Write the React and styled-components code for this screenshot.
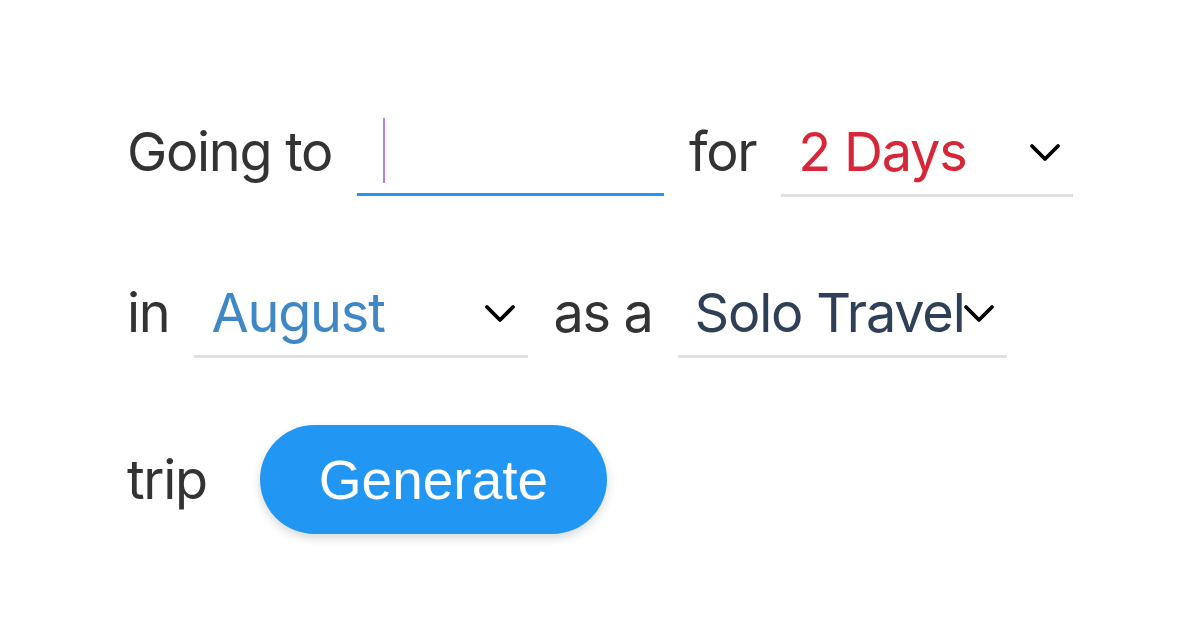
import React from "react";
import styled, { createGlobalStyle } from "styled-components";

const Global = createGlobalStyle`
  html, body { margin: 0; padding: 0; background: #fff; }
  body { font-family: Inter, "Liberation Sans", sans-serif; }
`;

const Page = styled.main`
  display: flex;
  flex-direction: column;
  padding: 77px 0 0 127px;
  width: 1200px;
  height: 630px;
  box-sizing: border-box;
`;

const Row = styled.div`
  display: flex;
  flex-wrap: wrap;
  align-items: baseline;
  align-content: center;
  gap: 25px;
  height: 161px;
`;

const Label = styled.span`
  font-size: 54px;
  line-height: 66px;
  letter-spacing: -1.3px;
  color: #333333;
`;

const InputWrap = styled.div`
  position: relative;
  width: 307px;
`;

const TextInput = styled.input`
  box-sizing: border-box;
  width: 100%;
  height: 78px;
  padding: 0 0 9px 26px;
  border: none;
  border-bottom: 3px solid #2196f3;
  outline: none;
  background: transparent;
  font-family: inherit;
  font-size: 54px;
  line-height: 66px;
  color: #333;
`;

const Caret = styled.span`
  position: absolute;
  left: 26px;
  top: 0;
  width: 2px;
  height: 65px;
  background: #b47fe0;
`;

const Field = styled.div`
  position: relative;
  box-sizing: border-box;
  width: ${(p) => p.$w}px;
  padding: 0 0 9px 17px;
  border-bottom: 3px solid #e0e0e0;
  font-size: 54px;
  line-height: 66px;
  letter-spacing: -1.2px;
  color: ${(p) => p.$color};
  white-space: nowrap;
`;

const Chevron = styled.svg`
  position: absolute;
  right: 11px;
  top: 23px;
  width: 34px;
  height: 21px;
`;

const Button = styled.button`
  margin-left: 28px;
  height: 109px;
  padding: 0 59px;
  border: none;
  border-radius: 55px;
  background: #2196f3;
  color: #fff;
  font-family: "Liberation Sans", Arial, sans-serif;
  font-size: 55px;
  line-height: 66px;
  box-shadow: 0 4px 10px rgba(0, 0, 0, 0.16);
  cursor: pointer;
`;

function Select({ value, color, width }) {
  return (
    <Field $w={width} $color={color}>
      {value}
      <Chevron viewBox="0 0 34 21" aria-hidden="true">
        <polyline
          points="4,4 17,17 30,4"
          fill="none"
          stroke="#000"
          strokeWidth="3.8"
          strokeLinecap="round"
          strokeLinejoin="round"
        />
      </Chevron>
    </Field>
  );
}

export default function App() {
  return (
    <>
      <Global />
      <Page>
        <Row>
          <Label>Going to</Label>
          <InputWrap>
            <TextInput type="text" defaultValue="" aria-label="Destination" />
            <Caret />
          </InputWrap>
          <Label>for</Label>
          <Select value="2 Days" color="#D72638" width={292} />
        </Row>
        <Row>
          <Label>in</Label>
          <Select value="August" color="#3F88C5" width={334} />
          <Label>as a</Label>
          <Select value="Solo Travel" color="#2E4057" width={329} />
        </Row>
        <Row>
          <Label>trip</Label>
          <Button>Generate</Button>
        </Row>
      </Page>
    </>
  );
}
